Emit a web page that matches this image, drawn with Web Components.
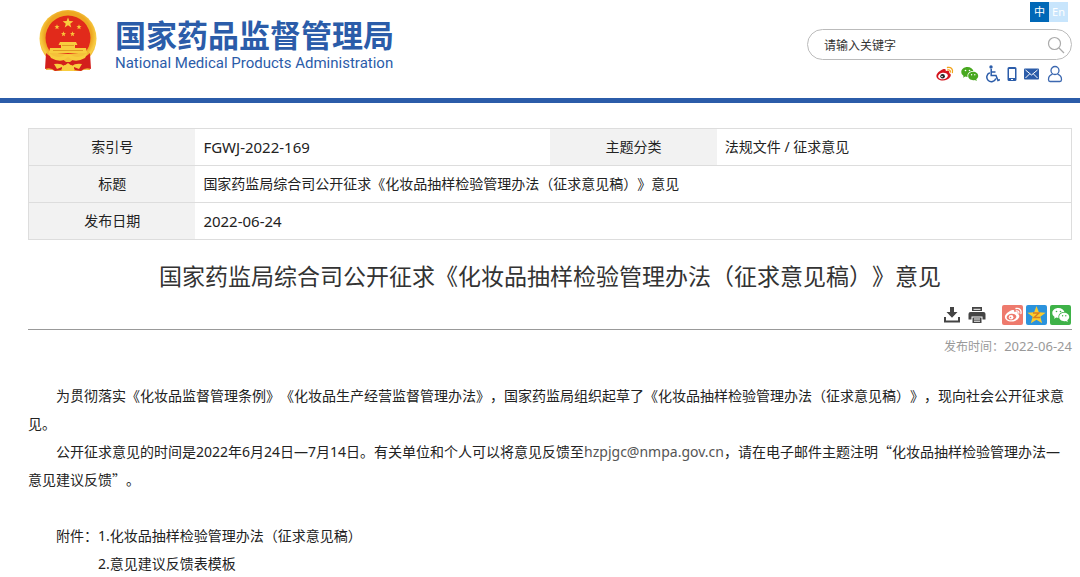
<!DOCTYPE html>
<html lang="zh-CN">
<head>
<meta charset="utf-8">
<meta name="viewport" content="width=device-width, initial-scale=1">
<title>国家药监局综合司公开征求《化妆品抽样检验管理办法&#65288;征求意见稿&#65289;》意见</title>
<style>
  html { background: #fff; }
  body {
    margin: 0;
    color: #222;
    font: 14px/28px "Noto Sans", "Noto Sans CJK SC", sans-serif;
    text-spacing-trim: space-all;
    overflow-x: hidden;
  }
</style>
</head>
<body>
<site-header></site-header>
<notice-page>
  <doc-info></doc-info>
  <notice-title>国家药监局综合司公开征求《化妆品抽样检验管理办法&#65288;征求意见稿&#65289;》意见</notice-title>
  <share-bar></share-bar>
  <notice-body></notice-body>
</notice-page>

<script>
const define = (name, html) => {
  const tpl = document.createElement('template');
  tpl.innerHTML = html;
  customElements.define(name, class extends HTMLElement {
    constructor() {
      super();
      this.attachShadow({ mode: 'open' }).append(tpl.content.cloneNode(true));
    }
  });
};

const star = (cx, cy, r, fill) => {
  const pts = [];
  for (let i = 0; i < 10; i++) {
    const a = -Math.PI / 2 + i * Math.PI / 5, k = i % 2 ? r * 0.42 : r;
    pts.push((cx + k * Math.cos(a)).toFixed(2) + ',' + (cy + k * Math.sin(a)).toFixed(2));
  }
  return `<polygon points="${pts.join(' ')}" fill="${fill}"/>`;
};

define('national-emblem', `
<style>:host { display: block; } svg { display: block; width: 58px; height: 62px; }</style>
<svg viewBox="0 0 58 62" role="img" aria-label="国徽">
  <defs><radialGradient id="g" cx=".5" cy=".45" r=".55"><stop offset=".75" stop-color="#eda722"/><stop offset=".9" stop-color="#f9cf45"/><stop offset="1" stop-color="#ecae2e"/></radialGradient></defs>
  <ellipse cx="29" cy="28.500" rx="28.500" ry="28.500" fill="url(#g)"/>
  <path d="M8 42L50 42L51 60Q45 59 42 61H16Q12 59 7 60Z" fill="#efb22f"/>
  <circle cx="29" cy="28" r="22.500" fill="#e12a1b"/>
  <path d="M10 41Q29 47 48 41L45 52H13Z" fill="#f5c13a"/>
  ${star(29, 13, 5.6, '#f9cf3f')}${star(18, 17, 2.7, '#f9c53a')}${star(40, 17, 2.7, '#f9c53a')}${star(24.5, 24, 2.7, '#f9c53a')}${star(33.5, 24, 2.7, '#f9c53a')}
  <path d="M21 32H37L38.500 35H36V38H47L48 43H10L11 38H22V35H19.500Z" fill="#f8cd3e"/>
  <path d="M23 35.500H35M14 40.500H44" stroke="#d98b1e" stroke-width=".8"/>
  <path d="M7 43Q12 49 22 48L27 52L31 52L36 48Q46 49 51 43L52 59Q46 57 42 61L36 60L33 55H25L22 60L16 61Q12 57 6 59Z" fill="#d31f1c"/>
  <path d="M9 42Q16 49 24 46Q29 42 34 46Q42 49 49 42L46 48Q39 52 33 50L29 47L25 50Q19 52 12 48Z" fill="#f8cd3e"/>
  <path d="M15 54Q22 53 25 56L29 53L33 56Q36 53 43 54L40 59L35 57V61H23V57L18 59Z" fill="#f8cd3e"/>
</svg>`);

define('site-brand', `
<style>
  :host { display: block; }
  a { display: flex; gap: 18px; color: #2b5ca9; text-decoration: none; }
  .names { display: flex; flex-direction: column; padding-top: 6px; }
  .cn { font: 700 31px/36px "Noto Sans CJK SC", sans-serif; white-space: nowrap; }
  .en { font: 400 15px/22px Roboto, sans-serif; white-space: nowrap; }
</style>
<a href="#"><national-emblem></national-emblem>
  <span class="names"><span class="cn">国家药品监督管理局</span><span class="en">National Medical Products Administration</span></span>
</a>`);

define('lang-switch', `
<style>
  :host { display: flex; }
  a { width: 19px; height: 20px; font: 11px/20px "Noto Sans", "Noto Sans CJK SC", sans-serif; text-align: center; color: #fff; text-decoration: none; background: #c8e5fc; }
  a.on { background: #0068b7; }
</style>
<a class="on" href="#">中</a><a href="#" lang="en">En</a>`);

define('search-box', `
<style>
  :host { display: block; }
  form { display: flex; align-items: center; box-sizing: border-box; width: 265px; height: 31px; border: 1px solid #bbb; border-radius: 16px; padding: 0 6px 0 16px; background: #fff; }
  input { flex: 1; min-width: 0; border: 0; padding: 0; outline: 0; background: none; font: 12px/20px "Noto Sans CJK SC", sans-serif; color: #333; }
  input::placeholder { color: #333; opacity: 1; }
  button { display: flex; border: 0; padding: 0; background: none; }
</style>
<form role="search"><input type="text" aria-label="搜索" placeholder="请输入关键字">
<button type="button" aria-label="搜索"><svg width="18" height="18" viewBox="0 0 18 18" fill="none" stroke="#aaa" stroke-width="1.200"><circle cx="7.500" cy="7.500" r="6"/><path d="M12 12L17 17"/></svg></button></form>`);

const wechat = (c, eye) => `
  <path d="M6.500 1C2.900 1 .3 3.200.3 6c0 1.600.9 2.900 2.300 3.900L2 11.700l2.300-1.100c.7.200 1.400.3 2.200.3-.6-3.200 2-6 5.900-5.800C11.900 2.700 9.500 1 6.500 1z" fill="${c}"/>
  <path d="M12.200 5.800c-2.900 0-5 1.900-5 4.200s2.100 4.200 5 4.200c.6 0 1.200-.1 1.700-.3l1.900 1-.5-1.700c1.200-.8 1.900-1.900 1.900-3.200 0-2.300-2.200-4.200-5-4.200z" fill="${c}"/>
  <g fill="${eye}"><circle cx="4.500" cy="4.500" r=".8"/><circle cx="8.500" cy="4.500" r=".8"/><circle cx="10.600" cy="8.700" r=".7"/><circle cx="13.800" cy="8.700" r=".7"/></g>`;
const weibo = (c, wave, white, pupil) => `
  <path d="M7 3.300C9 2.500 10.300 3.200 9.700 5.300 12 4.400 14 4.900 13.100 7 15 7.600 15.300 9.400 14.200 11 12.800 13.300 9.800 14.500 6.800 14.500 3.200 14.500.4 12.700.4 10 .4 7.600 4 4.300 7 3.300z" fill="${c}"/>
  <ellipse cx="7" cy="10" rx="4.900" ry="3.300" fill="${white}" transform="rotate(-8 7 10)"/>
  <circle cx="6.600" cy="10.200" r="2.300" fill="${pupil}"/><circle cx="6" cy="10.500" r=".8" fill="${white}"/>
  <path d="M11.500 1.500C15 .7 17.300 3.300 16.400 6.600M11.800 3.900C13.700 3.500 14.700 4.700 14.300 6.200" fill="none" stroke="${wave}" stroke-width="1.300" stroke-linecap="round"/>`;

define('quick-links', `
<style>
  :host { display: flex; align-items: center; gap: 7px; height: 18px; }
  a { display: flex; } svg { display: block; }
</style>
<a href="#" aria-label="微博"><svg width="18" height="16" viewBox="0 0 18 16">${weibo('#d4141c', '#f3a41c', '#fff', '#222')}</svg></a>
<a href="#" aria-label="微信"><svg width="18" height="16" viewBox="0 0 18 16">${wechat('#48a81f', '#fff')}</svg></a>
<a href="#" aria-label="无障碍"><svg width="14" height="18" viewBox="0 0 14 18" fill="none" stroke="#2b5ca9" stroke-width="1.500"><circle cx="5" cy="2" r="1.700" fill="#2b5ca9" stroke="none"/><path d="M5.200 4V10.500H10L12 15.500L14 14.800M5.500 7H9.500M3.800 7.800A4.600 4.600 0 1 0 9.800 13.500"/></svg></a>
<a href="#" aria-label="手机版"><svg width="10" height="16" viewBox="0 0 10 16"><path fill="#2b5ca9" fill-rule="evenodd" d="M2 1H8Q9.500 1 9.500 2.500V13.500Q9.500 15 8 15H2Q.5 15 .5 13.500V2.500Q.5 1 2 1ZM2 3V12H8V3ZM4 13V14H6V13Z"/></svg></a>
<a href="#" aria-label="邮箱"><svg width="15" height="12" viewBox="0 0 15 12"><rect y=".5" width="15" height="11" rx="1" fill="#2b5ca9"/><path d="M1.500 2L7.500 7L13.500 2M1.500 10L5.500 6M13.500 10L9.500 6" fill="none" stroke="#fff" stroke-width="1"/></svg></a>
<a href="#" aria-label="用户"><svg width="18" height="18" viewBox="0 0 18 18" fill="none" stroke="#3c68b0" stroke-width="1.300"><circle cx="9" cy="5.500" r="4"/><path d="M6.500 9.200C4 10 2.500 12 2.500 14.500Q2.500 16.500 4 16.500H14Q15.500 16.500 15.500 14.500C15.500 12 14 10 11.500 9.200"/></svg></a>`);

define('site-header', `
<style>
  :host { display: flex; justify-content: space-between; align-items: flex-start; padding: 0 8px 0 39px; min-height: 98px; border-bottom: 5px solid #2b5ca9; }
  site-brand { padding-top: 10px; }
  .side { display: flex; flex-direction: column; align-items: flex-end; padding-top: 2px; }
  lang-switch { padding-right: 4px; }
  search-box { padding-top: 7px; }
  quick-links { padding: 5px 8px 0 0; }
</style>
<site-brand></site-brand>
<div class="side"><lang-switch></lang-switch><search-box></search-box><quick-links></quick-links></div>`);

define('notice-page', `
<style>:host { display: block; padding: 25px 8px 0 28px; }</style><slot></slot>`);

define('doc-info', `
<style>
  :host { display: block; }
  table { width: 100%; border-collapse: collapse; table-layout: fixed; border: 1px solid #ddd; line-height: 20px; }
  tr { border-bottom: 1px solid #ddd; }
  th { background: #f2f2f2; font-weight: 400; text-align: center; padding: 8px 0; }
  td { padding: 8px; text-align: left; }
  .label { width: 16%; } .value { width: 34%; }
  .code { font-size: 15px; }
</style>
<table>
  <colgroup><col class="label"><col class="value"><col class="label"><col class="value"></colgroup>
  <tr><th scope="row">索引号</th><td class="code">FGWJ-2022-169</td><th scope="row">主题分类</th><td>法规文件 / 征求意见</td></tr>
  <tr><th scope="row">标题</th><td colspan="3">国家药监局综合司公开征求《化妆品抽样检验管理办法&#65288;征求意见稿&#65289;》意见</td></tr>
  <tr><th scope="row">发布日期</th><td class="code" colspan="3">2022-06-24</td></tr>
</table>`);

define('notice-title', `
<style>
  :host { display: block; padding-top: 19px; }
  h1 { margin: 0; font-size: 23px; line-height: 34px; font-weight: 400; text-align: center; color: #333; }
</style><h1><slot></slot></h1>`);

define('share-bar', `
<style>
  :host { display: block; padding-top: 12px; }
  .tools { display: flex; justify-content: flex-end; align-items: center; gap: 3px; padding: 0 1px 4px 0; border-bottom: 1px solid #999; }
  button, a { display: flex; border: 0; padding: 0; background: none; }
  button { margin-right: 5px; }
  .print { margin-right: 13px; }
  p { margin: 0; padding-top: 6px; text-align: right; font-size: 12px; line-height: 20px; color: #999; }
  time { font-size: 13px; }
</style>
<div class="tools">
  <button type="button" aria-label="下载"><svg width="16" height="18" viewBox="0 0 16 18" fill="#444"><path d="M6 1H10V6H13.500L8 11.800L2.500 6H6ZM0 11H2V14.500H14V11H16V16.500H0Z"/></svg></button>
  <button type="button" class="print" aria-label="打印"><svg width="18" height="18" viewBox="0 0 18 18"><path d="M4 1H14V5H4ZM2.500 6H15.500Q17.500 6 17.500 8V13.500H14.500V10.500H3.500V13.500H.5V8Q.5 6 2.500 6ZM4.500 11.500H13.500V17H4.500Z" fill="#444"/><path d="M5.500 3.300H12.500M6 13H12M6 15.200H12" stroke="#fff" stroke-width="1"/></svg></button>
  <a href="#" aria-label="分享到微博"><svg width="21" height="20" viewBox="0 0 21 20"><rect width="21" height="20" rx="2" fill="#ee7a6d"/><g transform="translate(2.500 2)">${weibo('#fff', '#fff', '#ee7a6d', '#fff')}</g></svg></a>
  <a href="#" aria-label="分享到QQ空间"><svg width="21" height="20" viewBox="0 0 21 20"><rect width="21" height="20" rx="2" fill="#2b93dd"/>${star(10.5, 10.6, 9.6, '#fccb2e')}<path d="M7 8H13L8 12.500H14" fill="none" stroke="#d9801e" stroke-width="1.400"/></svg></a>
  <a href="#" aria-label="分享到微信"><svg width="21" height="20" viewBox="0 0 21 20"><rect width="21" height="20" rx="2" fill="#3eb248"/><g transform="translate(2 2)">${wechat('#fff', '#3eb248')}</g></svg></a>
</div>
<p>发布时间&#65306;<time datetime="2022-06-24">2022-06-24</time></p>`);

define('notice-body', `
<style>
  :host { display: block; padding-top: 25px; }
  p { margin: 0; text-indent: 2em; }
  .cjk { font-family: "Noto Sans CJK SC", sans-serif; line-height: 1; }
  a { color: inherit; text-decoration: none; }
  a.mail { color: #555; }
  .files { display: flex; padding: 28px 0 0 28px; }
  ul { list-style: none; margin: 0; padding: 0; }
</style>
<p>为贯彻落实《化妆品监督管理条例》《化妆品生产经营监督管理办法》&#65292;国家药监局组织起草了《化妆品抽样检验管理办法&#65288;征求意见稿&#65289;》&#65292;现向社会公开征求意见。</p>
<p>公开征求意见的时间是2022年6月24日—7月14日。有关单位和个人可以将意见反馈至<a class="mail" href="mailto:hzpjgc@nmpa.gov.cn">hzpjgc@nmpa.gov.cn</a>&#65292;请在电子邮件主题注明<span class="cjk">“</span>化妆品抽样检验管理办法—意见建议反馈<span class="cjk">”</span>。</p>
<div class="files"><span>附件&#65306;</span><ul><li><a href="#">1.化妆品抽样检验管理办法&#65288;征求意见稿&#65289;</a></li><li><a href="#">2.意见建议反馈表模板</a></li></ul></div>`);
</script>
</body>
</html>
